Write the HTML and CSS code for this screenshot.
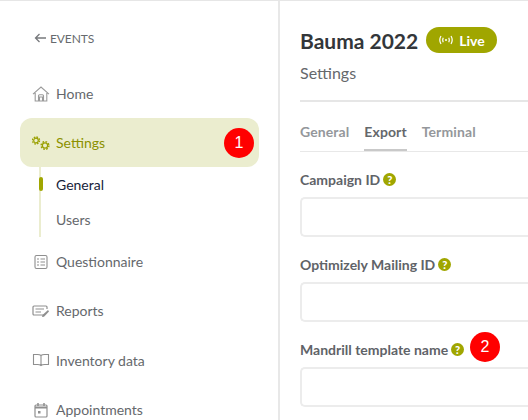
FILE: index.html
```html
<!DOCTYPE html>
<html lang="en">
<head>
  <meta charset="UTF-8" />
  <title>Bauma 2022 - Settings</title>
  <link rel="stylesheet" href="styles.css">
</head>
<body>
  <aside class="sidebar">
    <a class="back-link">
      <svg width="12" height="10" viewBox="0 0 12 10"><path d="M5.500 1 1.500 5l4 4M1.500 5H12" fill="none" stroke="#77797c" stroke-width="1.300"/></svg>
      EVENTS
    </a>

    <nav class="nav">
      <a class="nav-item">
        <svg class="nav-icon" width="18" height="18" viewBox="0 0 18 18" fill="none" stroke="#9a9a9a" stroke-width="1.100"><path d="M1 9.200 9 2l8 7.200M3.200 8v8h11.600V8M6.500 16v-5.200a1 1 0 0 1 1-1h3a1 1 0 0 1 1 1V16M7.500 16v-4h3v4"/></svg>
        Home
      </a>

      <a class="nav-item active">
        <svg class="nav-icon" width="18" height="18" viewBox="0 0 18 18" fill="none" stroke="#9aa000"><circle cx="4" cy="6.500" r="2.300" stroke-width="1.200"/><circle cx="4" cy="6.500" r="3.500" stroke-width="1.400" stroke-dasharray="1.600 1.150"/><circle cx="13" cy="11.500" r="2.600" stroke-width="1.200"/><circle cx="13" cy="11.500" r="3.900" stroke-width="1.400" stroke-dasharray="1.700 1.360"/></svg>
        Settings
        <span class="marker">1</span>
      </a>

      <div class="subnav">
        <a class="sub-item current">General</a>
        <a class="sub-item">Users</a>
      </div>

      <a class="nav-item lower">
        <svg class="nav-icon" width="18" height="18" viewBox="0 0 18 18" fill="none" stroke="#8f8f8f" stroke-width="1.100"><rect x="3" y="2.500" width="12" height="13" rx="1.500"/><path d="M5 6h2M5 9h2M5 12h2M8.500 6H13M8.500 9H13M8.500 12H13"/></svg>
        Questionnaire
      </a>
      <a class="nav-item lower">
        <svg class="nav-icon" width="18" height="18" viewBox="0 0 18 18" fill="none" stroke="#8f8f8f" stroke-width="1.200"><path d="M12 13H2a1 1 0 0 1-1-1V5a1 1 0 0 1 1-1h12a1 1 0 0 1 1 1v2M3.500 7H12M3.500 10H9"/><path d="m10 15 .5-2 5.500-5 1 1.500-5 5.300z" fill="#8f8f8f" stroke="none"/></svg>
        Reports
      </a>
      <a class="nav-item lower">
        <svg class="nav-icon" width="18" height="18" viewBox="0 0 18 18" fill="none" stroke="#8f8f8f" stroke-width="1.100"><path d="M9 4.500C8 3.600 7 3.500 5.500 3.500H1.500v10h4c1.500 0 2.500.2 3.500 1 1-.8 2-1 3.500-1h4v-10h-4C11 3.500 10 3.600 9 4.500zM9 4.500v10"/></svg>
        Inventory data
      </a>
      <a class="nav-item lower">
        <svg class="nav-icon" width="18" height="18" viewBox="0 0 18 18" fill="none" stroke="#8f8f8f" stroke-width="1.200"><rect x="3" y="4" width="12" height="12" rx="1"/><path d="M3 6.500h12" stroke-width="2"/><path d="M6 2v3M12 2v3" stroke-width="1.500"/><rect x="6" y="10" width="2.500" height="2.500" fill="#8f8f8f" stroke="none"/></svg>
        Appointments
      </a>
    </nav>
  </aside>

  <main class="content">
    <header class="page-head">
      <div class="title-row">
        <h1>Bauma 2022</h1>
        <span class="live-badge">
          <svg width="16" height="10" viewBox="0 0 16 10" fill="none" stroke="#fff" stroke-width="1.200"><path d="M3 1C1.500 3.500 1.500 6.500 3 9M13 1c1.500 2.500 1.500 5.500 0 8M5.300 2.800c-.8 1.500-.8 2.900 0 4.400M10.700 2.800c.8 1.500.8 2.900 0 4.400"/><circle cx="8" cy="5" r="1" fill="#fff" stroke="none"/></svg>
          Live
        </span>
      </div>
      <div class="subtitle">Settings</div>
    </header>

    <div class="tabs">
      <a class="tab">General</a>
      <a class="tab selected">Export</a>
      <a class="tab">Terminal</a>
    </div>

    <form class="form">
      <label class="field">
        <span class="field-label">Campaign ID <span class="help">?</span></span>
        <input type="text" />
      </label>
      <label class="field">
        <span class="field-label">Optimizely Mailing ID <span class="help">?</span></span>
        <input type="text" />
      </label>
      <label class="field">
        <span class="field-label">Mandrill template name <span class="help">?</span><span class="marker floating">2</span></span>
        <input type="text" />
      </label>
    </form>
  </main>
</body>
</html>
```

FILE: styles.css
```css
* {
  box-sizing: border-box;
}

html, body {
  height: 100%;
}

body {
  margin: 0;
  display: flex;
  overflow: hidden;
  border-top: 1px solid #e6e6e6;
  font-family: Lato, "Liberation Sans", sans-serif;
  color: #5f6368;
  background: #fff;
}

/* sidebar */
.sidebar {
  flex: 0 0 280px;
  padding: 30px 19px 0 20px;
  border-right: 2px solid #e8e8e8;
}

.back-link {
  display: flex;
  align-items: center;
  gap: 4px;
  height: 14px;
  padding-left: 14px;
  font-size: 12px;
  letter-spacing: -0.1px;
  color: #666a6e;
}

.nav {
  margin-top: 24px;
}

.nav-item {
  display: flex;
  align-items: center;
  gap: 6px;
  height: 49px;
  padding: 0 12px;
  font-size: 14px;
  color: #65686c;
}

.nav-item.lower {
  height: 49.300px;
}

.nav-icon {
  flex: none;
}

.nav-item.active {
  background: #ebedcf;
  border-radius: 12px;
  color: #8c9100;
}

.marker {
  display: flex;
  align-items: center;
  justify-content: center;
  width: 30px;
  height: 30px;
  margin-left: auto;
  margin-right: -7px;
  border-radius: 50%;
  background: #ff0000;
  color: #fff;
  font-family: "Liberation Sans", sans-serif;
  font-size: 16px;
  font-weight: 400;
}

.marker.floating {
  position: absolute;
  top: -9px;
  left: 170px;
  margin: 0;
}

.subnav {
  margin-left: 19px;
  border-left: 2px solid #ebedcf;
}

.sub-item {
  position: relative;
  display: flex;
  align-items: center;
  height: 35px;
  padding-left: 15px;
  font-size: 14px;
  color: #65686c;
}

.sub-item.current {
  color: #17233a;
}

.sub-item.current::before {
  content: "";
  position: absolute;
  left: -2px;
  top: 10px;
  width: 4px;
  height: 14px;
  border-radius: 2px;
  background: #a0a600;
}

/* main column */
.content {
  flex: 1;
  min-width: 0;
  padding: 26px 0 0 20px;
}

.page-head {
  height: 75px;
  border-bottom: 2px solid #e6e6e6;
}

.title-row {
  display: flex;
  align-items: center;
  gap: 8px;
  height: 26px;
}

h1 {
  margin: 0;
  font-size: 21px;
  font-weight: 700;
  color: #33363a;
}

.live-badge {
  display: flex;
  align-items: center;
  gap: 5px;
  width: 71px;
  height: 26px;
  padding-left: 12px;
  border-radius: 13px;
  background: #a0a600;
  color: #fff;
  font-size: 14px;
  font-weight: 700;
}

.subtitle {
  margin-top: 10px;
  font-size: 16px;
  color: #65686c;
}

.tabs {
  display: flex;
  gap: 15px;
  height: 50px;
  padding-top: 20px;
  border-bottom: 1px solid #e8e8e8;
}

.tab {
  height: 29px;
  font-size: 14px;
  font-weight: 700;
  line-height: 19px;
  letter-spacing: 0.1px;
  color: #94979b;
}

.tab.selected {
  color: #65686c;
  border-bottom: 2px solid #c9c9c9;
}

.form {
  padding-top: 19px;
}

.field {
  display: block;
  margin-bottom: 19px;
}

.field-label {
  position: relative;
  display: flex;
  align-items: center;
  gap: 3px;
  height: 17px;
  margin-bottom: 9px;
  font-size: 14px;
  font-weight: 700;
  color: #5f6368;
  white-space: nowrap;
  width: max-content;
}

.help {
  display: inline-flex;
  align-items: center;
  justify-content: center;
  width: 13px;
  height: 13px;
  border-radius: 50%;
  background: #a0a600;
  color: #fff;
  font-size: 11px;
  font-weight: 900;
}

.field input {
  display: block;
  width: 100%;
  height: 40px;
  border: 2px solid #ececec;
  border-right: 0;
  border-radius: 5px 0 0 5px;
  background: #fff;
}
```
